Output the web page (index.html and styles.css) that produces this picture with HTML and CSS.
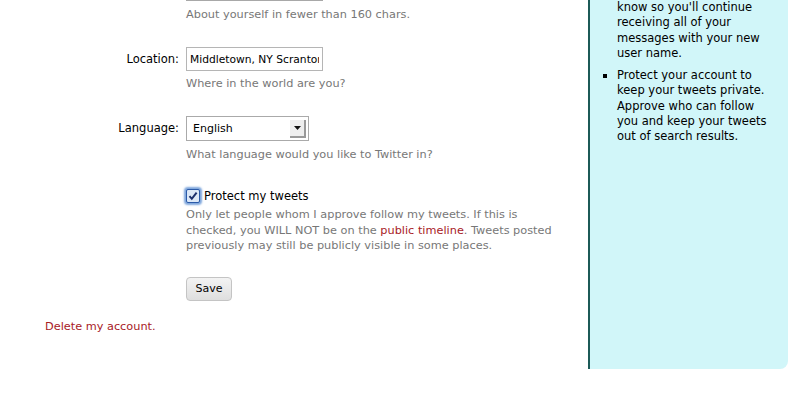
FILE: index.html
```html
<!DOCTYPE html>
<html lang="en">
<head>
  <meta charset="UTF-8">
  <title>Settings</title>
  <link rel="stylesheet" href="styles.css">
</head>
<body>
  <div class="page">
    <!-- Account form -->
    <div class="main">
      <div class="field">
        <div class="label"></div>
        <div class="control">
          <div class="bio-edge"></div>
          <p class="hint">About yourself in fewer than 160 chars.</p>
        </div>
      </div>

      <div class="field">
        <label class="label" for="location">Location:</label>
        <div class="control">
          <input class="text-input" type="text" id="location" value="Middletown, NY Scranton, PA">
          <p class="hint">Where in the world are you?</p>
        </div>
      </div>

      <div class="field">
        <label class="label" for="lang">Language:</label>
        <div class="control">
          <div class="select" id="lang">
            <span>English</span>
            <span class="select-arrow"><svg width="7" height="4" viewBox="0 0 7 4"><path d="M0 0h7L3.5 4z" fill="#111"/></svg></span>
          </div>
          <p class="hint">What language would you like to Twitter in?</p>
        </div>
      </div>

      <div class="field protect">
        <div class="label"></div>
        <div class="control">
          <div class="check-row">
            <span class="checkbox"><svg width="10" height="10" viewBox="0 0 10 10"><path d="M1.5 5.2l2.3 2.6L8.6 1.6" fill="none" stroke="#1b2f6b" stroke-width="2"/></svg></span>
            <span>Protect my tweets</span>
          </div>
          <p class="note">Only let people whom I approve follow my tweets. If this is checked, you WILL NOT be on the <a href="#">public timeline</a>. Tweets posted previously may still be publicly visible in some places.</p>
        </div>
      </div>

      <div class="field">
        <div class="label"></div>
        <div class="control">
          <button class="save">Save</button>
        </div>
      </div>

      <a class="delete" href="#">Delete my account.</a>
    </div>

    <!-- Sidebar tips -->
    <div class="side">
      <ul>
        <li class="cont">know so you'll continue receiving all of your messages with your new user name.</li>
        <li>Protect your account to keep your tweets private. Approve who can follow you and keep your tweets out of search results.</li>
      </ul>
    </div>
  </div>
</body>
</html>
```

FILE: styles.css
```css
body {
  margin: 0;
  font-family: 'DejaVu Sans', sans-serif;
  font-size: 11.5px;
  color: #000;
  background: #fff;
}

.page {
  display: flex;
  align-items: flex-start;
}

/* Form column */
.main {
  width: 588px;
}

.field {
  display: flex;
  gap: 7px;
}

.label {
  width: 179px;
  text-align: right;
  font-size: 11.5px;
  padding-top: 5px;
}

.control {
  flex: 1;
}

.bio-edge {
  width: 137px;
  height: 0;
  border-bottom: 1px solid #a8a8a8;
  margin-bottom: 6px;
}

.hint {
  margin: 0 0 25px;
  color: #777;
  font-size: 11.3px;
  line-height: 15px;
}

.text-input {
  display: block;
  box-sizing: border-box;
  width: 137px;
  height: 24px;
  padding: 0 3px;
  border: 1px solid #b5b5b5;
  border-radius: 0;
  outline: none;
  margin: 0 0 5px;
  font-family: inherit;
  font-size: 10.7px;
  color: #000;
}

.select {
  width: 115px;
  height: 23px;
  border: 1px solid #aaa;
  display: flex;
  align-items: center;
  justify-content: space-between;
  padding-left: 6px;
  margin-bottom: 6px;
  font-size: 11px;
}

.select-arrow {
  width: 14px;
  height: 16px;
  margin-right: 2px;
  border-right: 2px solid #999;
  border-bottom: 2px solid #999;
  background: #eee;
  display: flex;
  align-items: center;
  justify-content: center;
}

.check-row {
  display: flex;
  align-items: center;
  gap: 4px;
  margin-top: 2px;
}

.checkbox {
  width: 12px;
  height: 12px;
  border: 1px solid #2b5aa8;
  border-radius: 2px;
  background: #dce8f7;
  box-shadow: 0 0 2px 2px #7ea6dc;
  display: flex;
  align-items: center;
  justify-content: center;
}

.note {
  margin: 4px 0 23px;
  width: 380px;
  color: #777;
  font-size: 11.3px;
  line-height: 15.5px;
}

a {
  color: #a8201f;
  text-decoration: none;
}

.save {
  font-family: inherit;
  font-size: 11px;
  width: 46px;
  height: 24px;
  border: 1px solid #c4c4c4;
  border-radius: 4px;
  background: linear-gradient(#f3f3f3, #dedede);
  color: #000;
  padding: 0;
}

.delete {
  display: block;
  margin: 19px 0 0 45px;
  font-size: 11.3px;
}

/* Sidebar */
.side {
  width: 198px;
  height: 369px;
  background: #d1f6f9;
  border-left: 2px solid #1c5a57;
  border-bottom-right-radius: 8px;
}

.side ul {
  margin: 0;
  padding: 0 18px 0 27px;
  list-style: square;
  font-size: 11.5px;
  line-height: 15.3px;
}

.side li {
  margin-bottom: 7px;
}

.side li.cont {
  list-style: none;
}
```
